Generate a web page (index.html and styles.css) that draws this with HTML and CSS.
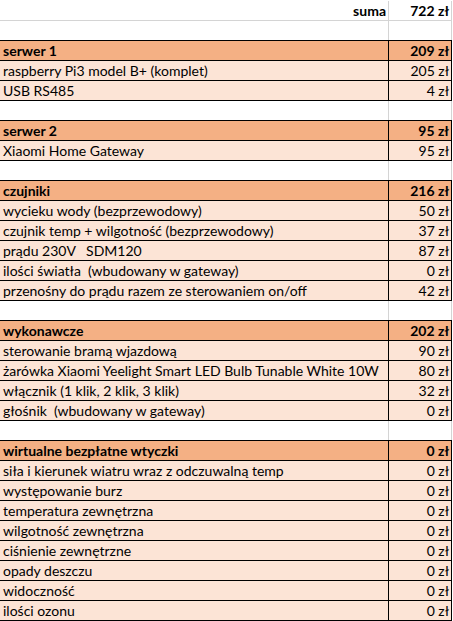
FILE: index.html
```html
<!DOCTYPE html>
<html lang="pl">
<head>
<meta charset="utf-8">
<title>Koszty</title>
<link rel="stylesheet" href="styles.css">
</head>
<body>
<div class="sheet">
  <div class="row plain top"><div class="name right bold">suma</div><div class="val bold">722 zł</div></div>
  <div class="row plain"><div class="name"></div><div class="val"></div></div>

  <div class="row head"><div class="name">serwer 1</div><div class="val">209 zł</div></div>
  <div class="row item"><div class="name">raspberry Pi3 model B+ (komplet)</div><div class="val">205 zł</div></div>
  <div class="row item"><div class="name">USB RS485</div><div class="val">4 zł</div></div>
  <div class="row gap"><div class="name"></div><div class="val"></div></div>

  <div class="row head"><div class="name">serwer 2</div><div class="val">95 zł</div></div>
  <div class="row item"><div class="name">Xiaomi Home Gateway</div><div class="val">95 zł</div></div>
  <div class="row gap"><div class="name"></div><div class="val"></div></div>

  <div class="row head"><div class="name">czujniki</div><div class="val">216 zł</div></div>
  <div class="row item"><div class="name">wycieku wody (bezprzewodowy)</div><div class="val">50 zł</div></div>
  <div class="row item"><div class="name">czujnik temp + wilgotność (bezprzewodowy)</div><div class="val">37 zł</div></div>
  <div class="row item"><div class="name">prądu 230V   SDM120</div><div class="val">87 zł</div></div>
  <div class="row item"><div class="name">ilości światła  (wbudowany w gateway)</div><div class="val">0 zł</div></div>
  <div class="row item"><div class="name">przenośny do prądu razem ze sterowaniem on/off</div><div class="val">42 zł</div></div>
  <div class="row gap"><div class="name"></div><div class="val"></div></div>

  <div class="row head"><div class="name">wykonawcze</div><div class="val">202 zł</div></div>
  <div class="row item"><div class="name">sterowanie bramą wjazdową</div><div class="val">90 zł</div></div>
  <div class="row item"><div class="name">żarówka Xiaomi Yeelight Smart LED Bulb Tunable White 10W</div><div class="val">80 zł</div></div>
  <div class="row item"><div class="name">włącznik (1 klik, 2 klik, 3 klik)</div><div class="val">32 zł</div></div>
  <div class="row item"><div class="name">głośnik  (wbudowany w gateway)</div><div class="val">0 zł</div></div>
  <div class="row gap"><div class="name"></div><div class="val"></div></div>

  <div class="row head"><div class="name">wirtualne bezpłatne wtyczki</div><div class="val">0 zł</div></div>
  <div class="row item"><div class="name">siła i kierunek wiatru wraz z odczuwalną temp</div><div class="val">0 zł</div></div>
  <div class="row item"><div class="name">występowanie burz</div><div class="val">0 zł</div></div>
  <div class="row item"><div class="name">temperatura zewnętrzna</div><div class="val">0 zł</div></div>
  <div class="row item"><div class="name">wilgotność zewnętrzna</div><div class="val">0 zł</div></div>
  <div class="row item"><div class="name">ciśnienie zewnętrzne</div><div class="val">0 zł</div></div>
  <div class="row item"><div class="name">opady deszczu</div><div class="val">0 zł</div></div>
  <div class="row item"><div class="name">widoczność</div><div class="val">0 zł</div></div>
  <div class="row item"><div class="name">ilości ozonu</div><div class="val">0 zł</div></div>
  <div class="end"></div>
</div>
</body>
</html>
```
FILE: styles.css
```css
html, body {
  margin: 0;
  padding: 0;
  background: #ffffff;
}
.sheet {
  width: 452px;
  font-family: Lato, "Open Sans", sans-serif;
  font-size: 14px;
  color: #000;
}
.row {
  display: flex;
  height: 20px;
  box-sizing: border-box;
  border-top: 1px solid #d4d4d4;
}
.row.top { border-top-color: #ffffff; }
.row.head, .row.item, .row.gap { border-top-color: #000; }
.name, .val {
  box-sizing: border-box;
  height: 19px;
  line-height: 20px;
  white-space: pre;
  overflow: hidden;
  border-right: 1px solid #d4d4d4;
}
.name {
  width: 389px;
  padding-left: 3px;
}
.val {
  width: 63px;
  text-align: right;
  padding-right: 2px;
}
.right { text-align: right; padding-right: 2px; }
.bold { font-weight: bold; }
.head { background: #f4b084; font-weight: bold; }
.item { background: #fce4d6; }
.head .name, .head .val, .item .name, .item .val { border-right-color: #000; }
.end {
  width: 452px;
  height: 1px;
  background: #000;
}
```
